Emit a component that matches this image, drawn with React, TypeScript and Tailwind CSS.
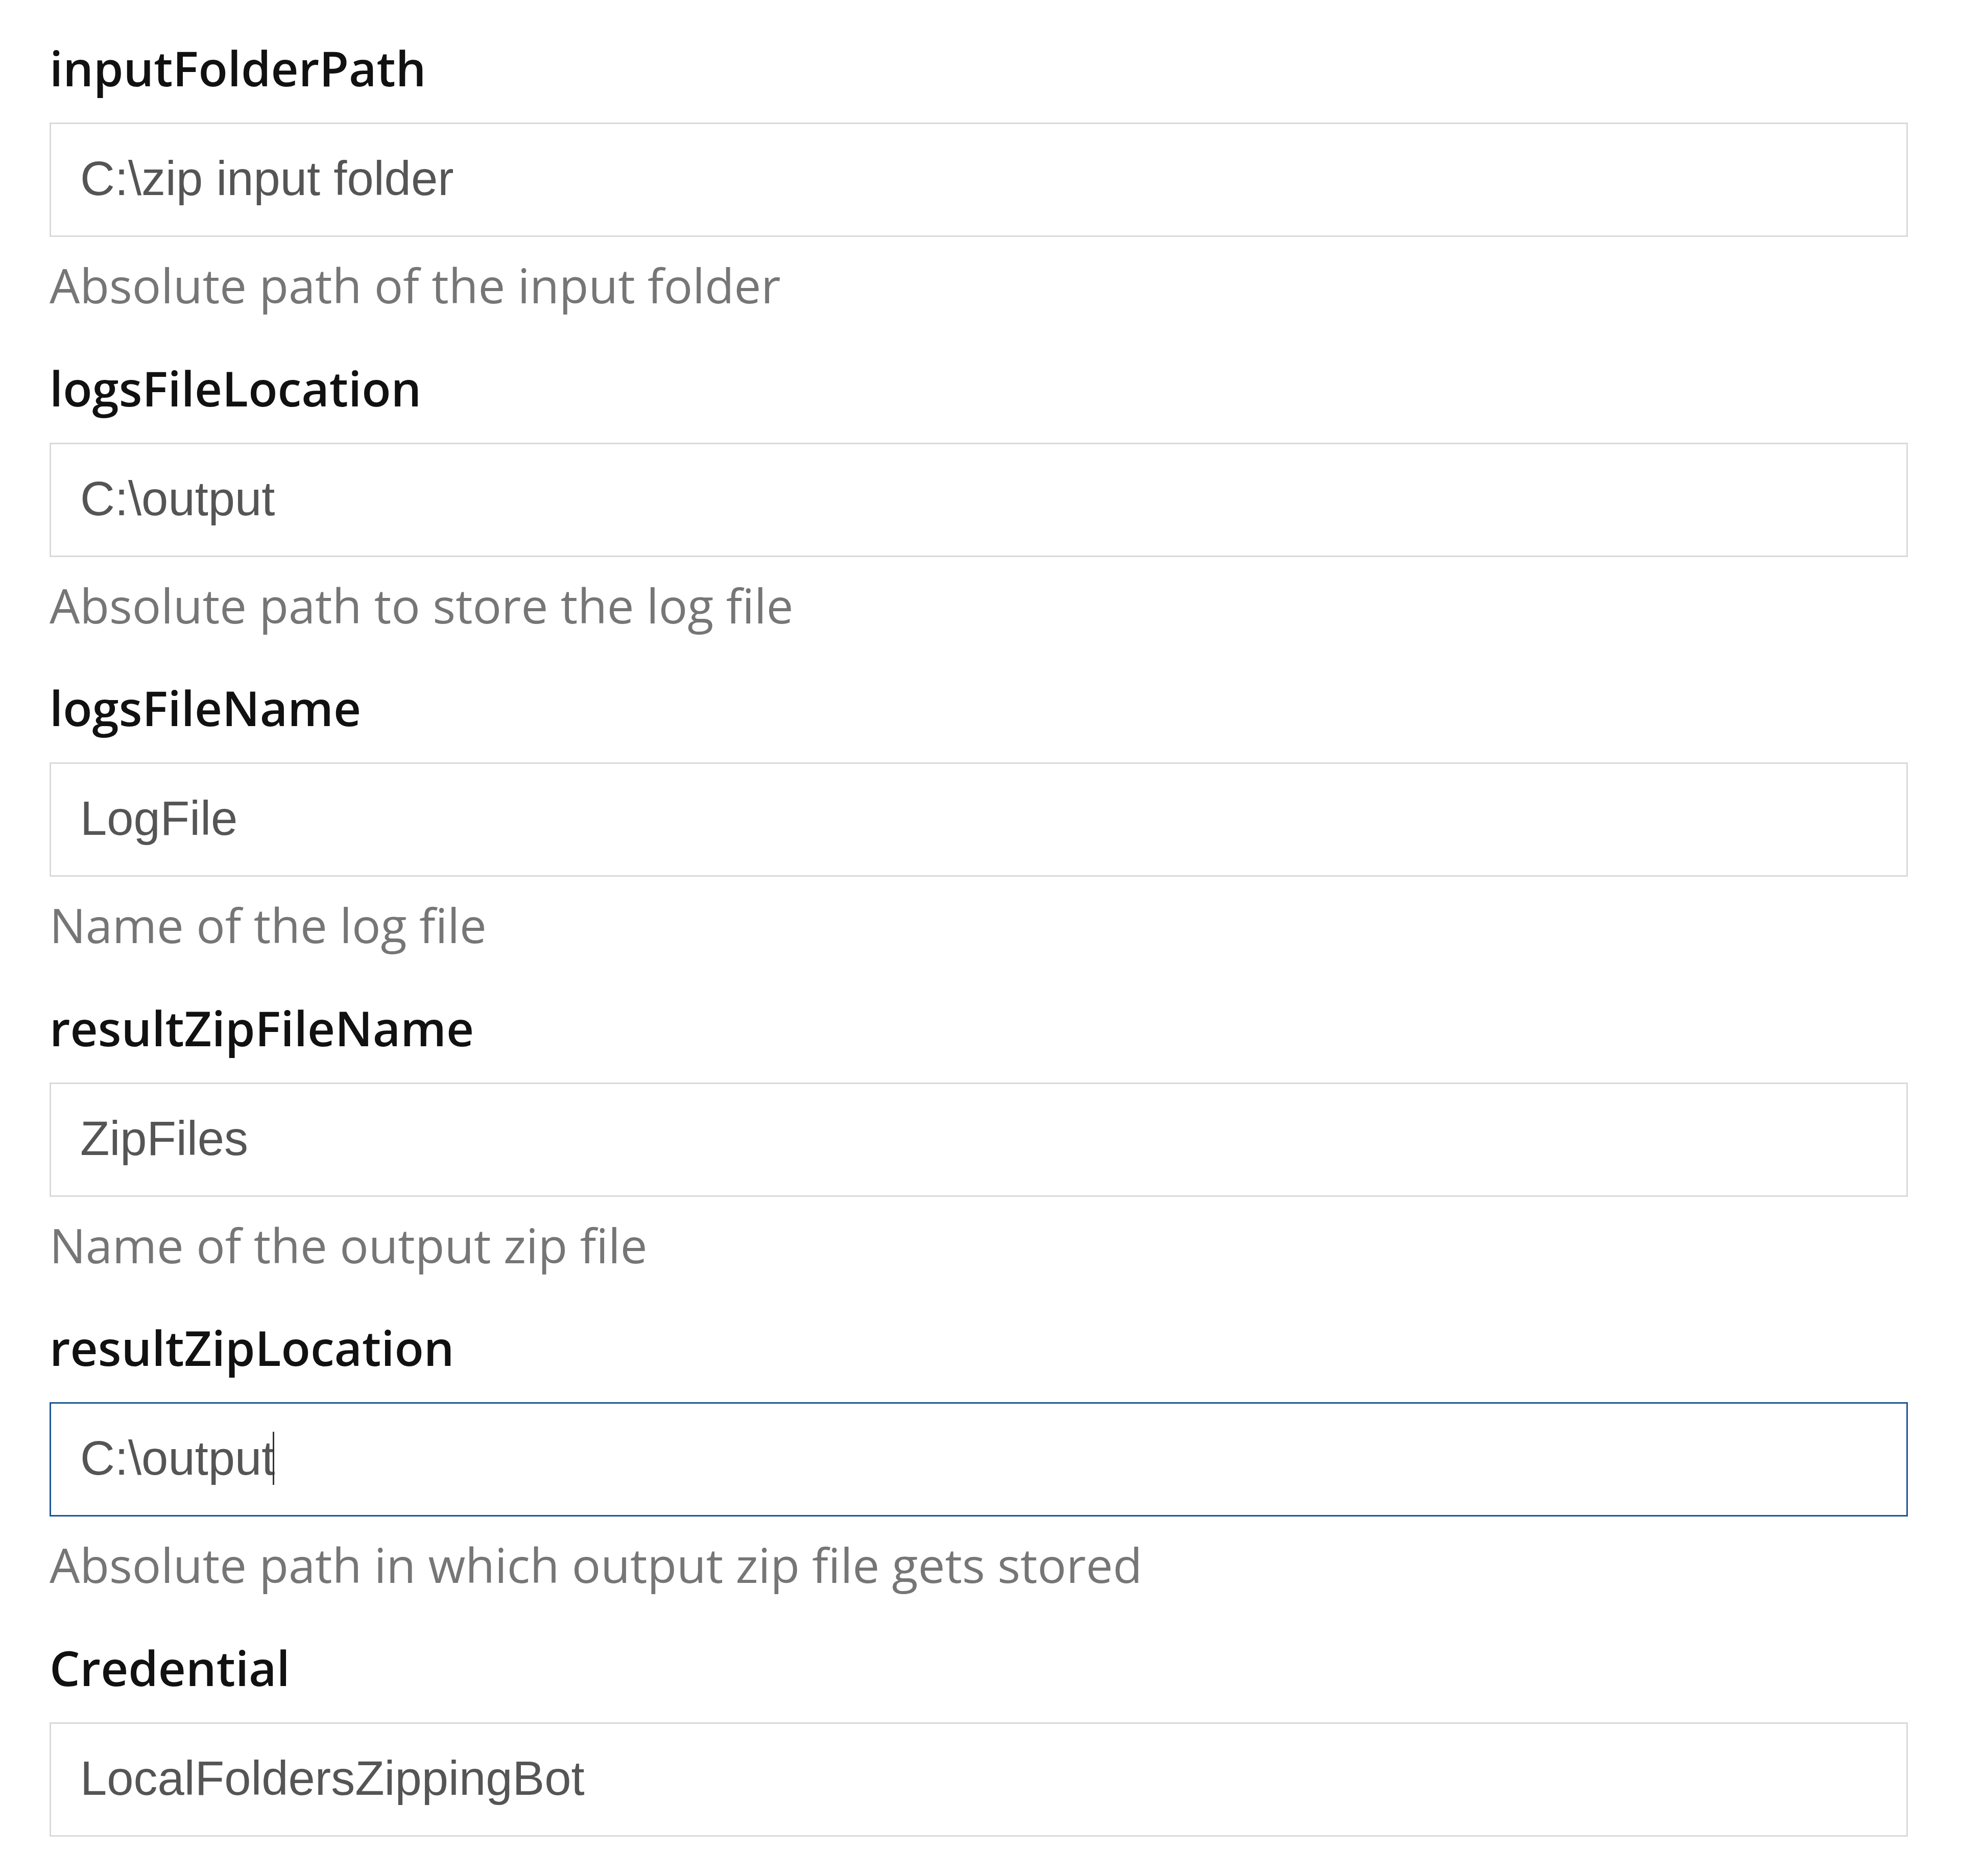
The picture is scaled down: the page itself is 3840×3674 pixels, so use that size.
import React from 'react';

type Field = {
  name: string;
  value: string;
  help?: string;
  focused?: boolean;
};

const FIELDS: Field[] = [
  { name: 'inputFolderPath', value: 'C:\\zip input folder', help: 'Absolute path of the input folder' },
  { name: 'logsFileLocation', value: 'C:\\output', help: 'Absolute path to store the log file' },
  { name: 'logsFileName', value: 'LogFile', help: 'Name of the log file' },
  { name: 'resultZipFileName', value: 'ZipFiles', help: 'Name of the output zip file' },
  { name: 'resultZipLocation', value: 'C:\\output', help: 'Absolute path in which output zip file gets stored', focused: true },
  { name: 'Credential', value: 'LocalFoldersZippingBot' },
];

export default function App() {
  return (
    <div className="min-h-screen bg-white pl-[97px] pr-[104px] pt-[76px] pb-[75px] font-['Open_Sans',sans-serif]">
      {FIELDS.map((field, i) => (
        <div key={field.name} className={i === 0 ? '' : 'mt-[86.5px]'}>
          {/* Label */}
          <div className="text-[94px] leading-[115px] font-semibold text-[#111111]">{field.name}</div>

          {/* Input box */}
          <div
            className={
              field.focused
                ? 'mt-[49px] h-[224px] border-[3px] border-[#1d5796] bg-white flex items-center pl-[57px] pb-[4px]'
                : 'mt-[49px] h-[224px] border-[3px] border-[#dadada] bg-white flex items-center pl-[57px] pb-[4px]'
            }
          >
            <span className="text-[94px] leading-none text-[#555555] font-['Liberation_Sans',Arial,sans-serif] whitespace-pre">
              {field.value}
            </span>
            {field.focused && <span className="ml-[-4px] w-[3px] h-[104px] bg-[#333333]" />}
          </div>

          {/* Help text */}
          {field.help && (
            <div className="mt-[37px] text-[94px] leading-[115px] text-[#767676]">{field.help}</div>
          )}
        </div>
      ))}
    </div>
  );
}
